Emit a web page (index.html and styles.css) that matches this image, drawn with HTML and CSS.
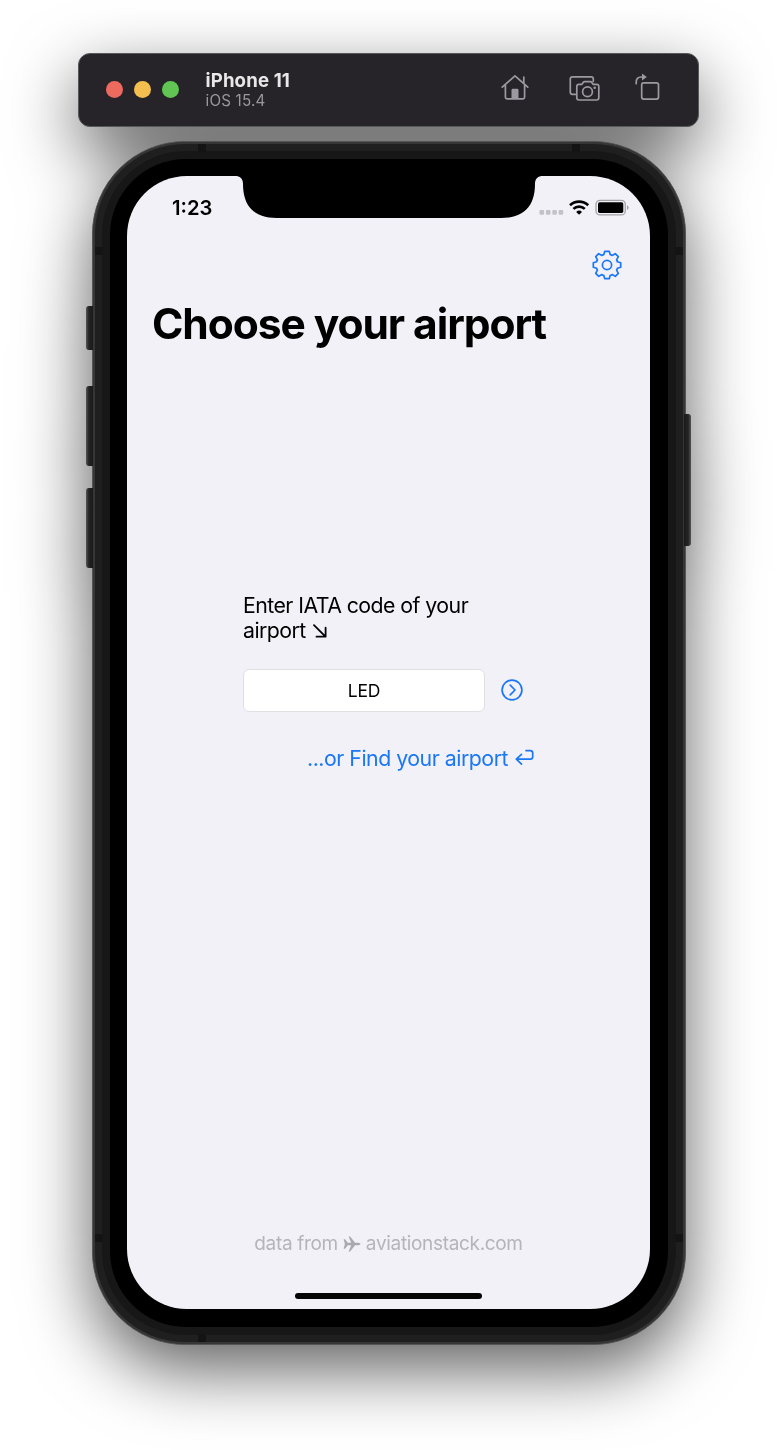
FILE: index.html
```html
<!DOCTYPE html>
<html lang="en">
<head>
<meta charset="utf-8">
<title>iPhone 11</title>
<link rel="stylesheet" href="styles.css">
</head>
<body>
<div class="simulator">
  <header class="toolbar">
    <div class="lights"><i class="light red"></i><i class="light yellow"></i><i class="light green"></i></div>
    <div class="device-info">
      <div class="device-name"><span>iPhone 11</span></div>
      <div class="device-os"><span>iOS 15.4</span></div>
    </div>
    <div class="tools">
      <svg class="tool-home" width="30" height="30" viewBox="500 73 30 30">
        <path d="M502.200 87.200 515 75.800 527.800 87.200M505.400 85v12.200q0 1.600 1.600 1.600h16q1.600 0 1.600-1.600V85M523.800 83v-5.800"/>
        <path class="solid" d="M511.500 99v-9q0-1.200 1.200-1.200h4.600q1.200 0 1.200 1.200v9z"/>
      </svg>
      <svg class="tool-camera" width="34" height="30" viewBox="568 73 34 30">
        <path d="M575.200 94.400h-2.700q-2.200 0-2.200-2.200V79q0-2.200 2.200-2.200h18.600q2.200 0 2.200 2.200v2.300M579 84.400h2.700l1.500-2q.6-.7 1.500-.7h5.600q.9 0 1.500.7l1.500 2h3.300q2.200 0 2.200 2.200v11.200q0 2.200-2.200 2.200H579q-2.200 0-2.200-2.200V86.600q0-2.200 2.200-2.200z"/>
        <circle cx="587.500" cy="91.800" r="4.900"/><circle class="dot" cx="594.700" cy="87.700" r="1.300"/>
      </svg>
      <svg class="tool-rotate" width="28" height="30" viewBox="634 72 28 30">
        <rect x="641.700" y="81.800" width="16.800" height="16.300" rx="2"/>
        <path d="M636.200 82.700v-1.200q0-5.500 5-5.500h2"/><path class="solid" d="M642 72.600v6.800l4.800-3.400z"/>
      </svg>
    </div>
  </header>

  <div class="phone">
    <i class="key mute"></i><i class="key vol-up"></i><i class="key vol-down"></i><i class="key power"></i>
    <i class="band h t l"></i><i class="band h t r"></i><i class="band h b l"></i>
    <i class="band v t l"></i><i class="band v t r"></i><i class="band v b l"></i><i class="band v b r"></i>
    <div class="rim"><div class="bezel"><div class="screen">
      <svg class="notch" width="308" height="42" viewBox="0 0 308 42"><path d="M0 0h308c-5 0-8 2.500-8 8 0 22-11 34-34 34H42C19 42 8 30 8 8 8 2.500 5 0 0 0z"/></svg>
      <div class="status">
        <span class="clock">1:23</span>
        <div class="indicators">
          <svg width="92" height="20" viewBox="538 198 92 20">
            <g fill="#c3c2c7"><rect x="539.500" y="210" width="4.600" height="4.800" rx="1"/><rect x="545.900" y="210" width="4.600" height="4.800" rx="1"/><rect x="552.300" y="210" width="4.600" height="4.800" rx="1"/><rect x="558.600" y="210" width="4.600" height="4.800" rx="1"/></g>
            <g fill="none" stroke="#000" stroke-width="2.600"><path d="M570 205.300a13.200 13.200 0 0 1 18.200 0M573.400 208.900a8.200 8.200 0 0 1 11.400 0"/></g>
            <path d="M579.100 214.800l-2.900-2.900a4.300 4.300 0 0 1 5.800 0z"/>
            <rect x="596" y="200.300" width="29.300" height="14.600" rx="4" fill="none" stroke="#a2a1a5" stroke-width="1.300"/>
            <rect x="598" y="202.300" width="25.300" height="10.600" rx="1.600"/><path d="M627 205.200q1.700.8 1.700 2.400t-1.700 2.400z" fill="#a2a1a5"/>
          </svg>
        </div>
      </div>
      <nav class="nav">
        <svg class="gear" width="32" height="32" viewBox="-16 -16 32 32"><path d="M-3.200-10.400L-2.200-13.700H2.200L3.200-10.400Q4.300-10.300 5.100-9.600L8.300-11.300 11.300-8.300 9.600-5.100Q10.300-4.300 10.400-3.200L13.700-2.200V2.200L10.400 3.200Q10.300 4.300 9.600 5.100L11.300 8.300 8.300 11.300 5.100 9.600Q4.300 10.300 3.200 10.400L2.200 13.700H-2.200L-3.200 10.400Q-4.300 10.300-5.100 9.600L-8.300 11.300-11.300 8.300-9.600 5.100Q-10.300 4.300-10.400 3.200L-13.700 2.200V-2.200L-10.400-3.200Q-10.300-4.300-9.600-5.100L-11.300-8.300-8.300-11.300-5.100-9.600Q-4.300-10.300-3.200-10.400Z"/><circle r="4.600"/></svg>
      </nav>
      <h1 class="title"><span>Choose your airport</span></h1>
      <main class="form">
        <div class="prompt">
          <div><span>Enter IATA code of your</span></div>
          <div><span>airport</span><svg width="14" height="14" viewBox="0 0 14 14"><path d="M1 1.200 12.500 12.600M12.600 3.600v9.100H3.500"/></svg></div>
        </div>
        <div class="entry">
          <div class="field"><span>LED</span></div>
          <svg class="go" width="24" height="24" viewBox="-12 -12 24 24"><circle r="9.900"/><path d="M-1.800-4.800 3 0-1.800 4.800"/></svg>
        </div>
        <div class="find"><span>...or Find your airport</span><svg width="19" height="17" viewBox="0 0 19 17"><path d="M6.500 5.300 1.300 10.200l5.200 4.900M1.600 10.200h13.700q2.400 0 2.400-2.400V4Q17.700 1.600 15.300 1.600h-4.300"/></svg></div>
      </main>
      <footer class="credit"><span>data from</span>
        <svg width="18" height="16" viewBox="0 0 18 16"><path d="M.6 3.300h1.500l2.700 3.400h3.400L5.600.5h1.500l5 6.200h3.300q2.100.4 2.100 1.300t-2.100 1.300h-3.300l-5 6.200H5.600l2.600-6.200H4.800l-2.700 3.400H.6L1.900 8z"/></svg>
        <span>aviationstack.com</span></footer>
      <div class="home-bar"></div>
    </div></div></div>
  </div>
</div>
</body>
</html>
```
FILE: styles.css
```css
* { box-sizing: border-box; }
html, body { margin: 0; background: #fff; }
body { height: 1450px; overflow: hidden; font-family: Inter, "Liberation Sans", sans-serif; color: #000; }
svg { display: block; flex: none; }
span { white-space: nowrap; }

.simulator {
  height: 1450px;
  padding-top: 53px;
  display: flex;
  flex-direction: column;
  align-items: center;
  filter: drop-shadow(0 25px 34px rgba(0, 0, 0, .62));
}

/* Window toolbar */
.toolbar {
  width: 621px;
  height: 73.5px;
  flex: none;
  border-radius: 12px;
  border: 1px solid #58575b;
  background: #262428;
  display: flex;
  align-items: center;
  padding: 0 36px 0 27px;
}
.lights { display: flex; gap: 11px; }
.light { width: 17px; height: 17px; border-radius: 50%; }
.red { background: #ed6a5e; }
.yellow { background: #f5bf4f; }
.green { background: #61c554; }
.device-info { margin-left: 26.5px; padding-top: 1px; }
.device-name { font-size: 18.6px; line-height: 21px; font-weight: 700; color: #e8e7e9; letter-spacing: .15px; }
.device-os { font-size: 15.2px; line-height: 20px; color: #98979b; letter-spacing: .2px; }
.tools { margin-left: auto; padding-bottom: 3px; display: flex; align-items: center; }
.tools svg { fill: none; stroke: #9c9aa0; stroke-width: 1.7; stroke-linecap: round; stroke-linejoin: round; }
.tools .solid, .tools .dot { fill: #9c9aa0; stroke: none; }
.tool-home { margin-right: 38px; }
.tool-camera { margin-right: 32px; }

/* Phone body */
.phone {
  position: relative;
  flex: none;
  width: 594px;
  height: 1204px;
  margin-top: 14.5px;
  padding: 9px;
  border: 1px solid #555;
  border-radius: 93px;
  background: #1f1f1f;
  box-shadow: inset 0 0 0 2px #363636;
}
.rim { height: 100%; padding: 8px; border-radius: 84px; background: #171717; }
.bezel { height: 100%; padding: 17px 17.5px 18px; border-radius: 76px; background: #000; }
.screen {
  position: relative;
  height: 100%;
  border-radius: 60px;
  background: #f2f1f7;
  display: flex;
  flex-direction: column;
}
.key { position: absolute; width: 7px; background: linear-gradient(90deg, #555, #242424 40%, #1a1a1a); border-radius: 3px 0 0 3px; left: -6.5px; }
.mute { top: 164px; height: 44px; }
.vol-up { top: 244px; height: 80px; }
.vol-down { top: 346px; height: 80px; }
.power { top: 272px; height: 132px; left: auto; right: -6px; border-radius: 0 3px 3px 0; background: linear-gradient(270deg, #555, #242424 40%, #1a1a1a); }
.band { position: absolute; width: 8px; height: 8px; background: #141414; }
.h.t { top: 2px; }
.h.b { bottom: 2px; }
.h.l { left: 105px; }
.h.r { right: 105px; }
.v.l { left: 2px; }
.v.r { right: 2px; }
.v.t { top: 105px; }
.v.b { bottom: 102px; }

/* Screen contents */
.notch { position: absolute; top: -.5px; left: 107.5px; }
.status { height: 60px; flex: none; display: flex; justify-content: space-between; padding: 21px 20.5px 0 45px; }
.indicators { padding-top: 1px; }
.clock { font-size: 20.2px; line-height: 22px; font-weight: 600; }
.nav { height: 58px; flex: none; display: flex; align-items: center; justify-content: flex-end; padding-right: 27px; }
.gear, .go, .find svg, .prompt svg { fill: none; stroke: #1a77f7; stroke-width: 1.7; stroke-linecap: round; stroke-linejoin: round; }
.title { margin: 0; height: 59px; flex: none; padding-left: 25px; font-size: 42.5px; line-height: 59px; font-weight: 700; letter-spacing: -1.07px; }
.form { margin: 239.5px 0 0 116px; width: 290px; }
.prompt { font-size: 21.3px; line-height: 25.5px; letter-spacing: -.55px; }
.prompt div { display: flex; align-items: center; gap: 7.5px; }
.prompt svg { stroke: #000; stroke-width: 1.8; }
.entry { display: flex; align-items: center; gap: 15px; margin-top: 25px; }
.field { width: 242px; height: 43px; border: 1px solid #dfdee3; border-radius: 6px; background: #fff; display: flex; align-items: center; justify-content: center; font-size: 17.5px; letter-spacing: -.2px; }
.find { display: flex; align-items: center; justify-content: flex-end; gap: 6.5px; margin-top: 33px; color: #1a77f7; font-size: 21.3px; line-height: 26px; letter-spacing: -.48px; }
.find svg { margin-right: -.5px; }
.credit { margin-top: auto; display: flex; align-items: center; justify-content: center; gap: 5px; color: #b5b4b9; font-size: 19px; line-height: 24px; letter-spacing: -.33px; }
.credit svg { fill: #aaa9ae; }
.home-bar { align-self: center; flex: none; width: 187px; height: 6.5px; margin: 37px 0 10px; border-radius: 4px; background: #050505; }
```
